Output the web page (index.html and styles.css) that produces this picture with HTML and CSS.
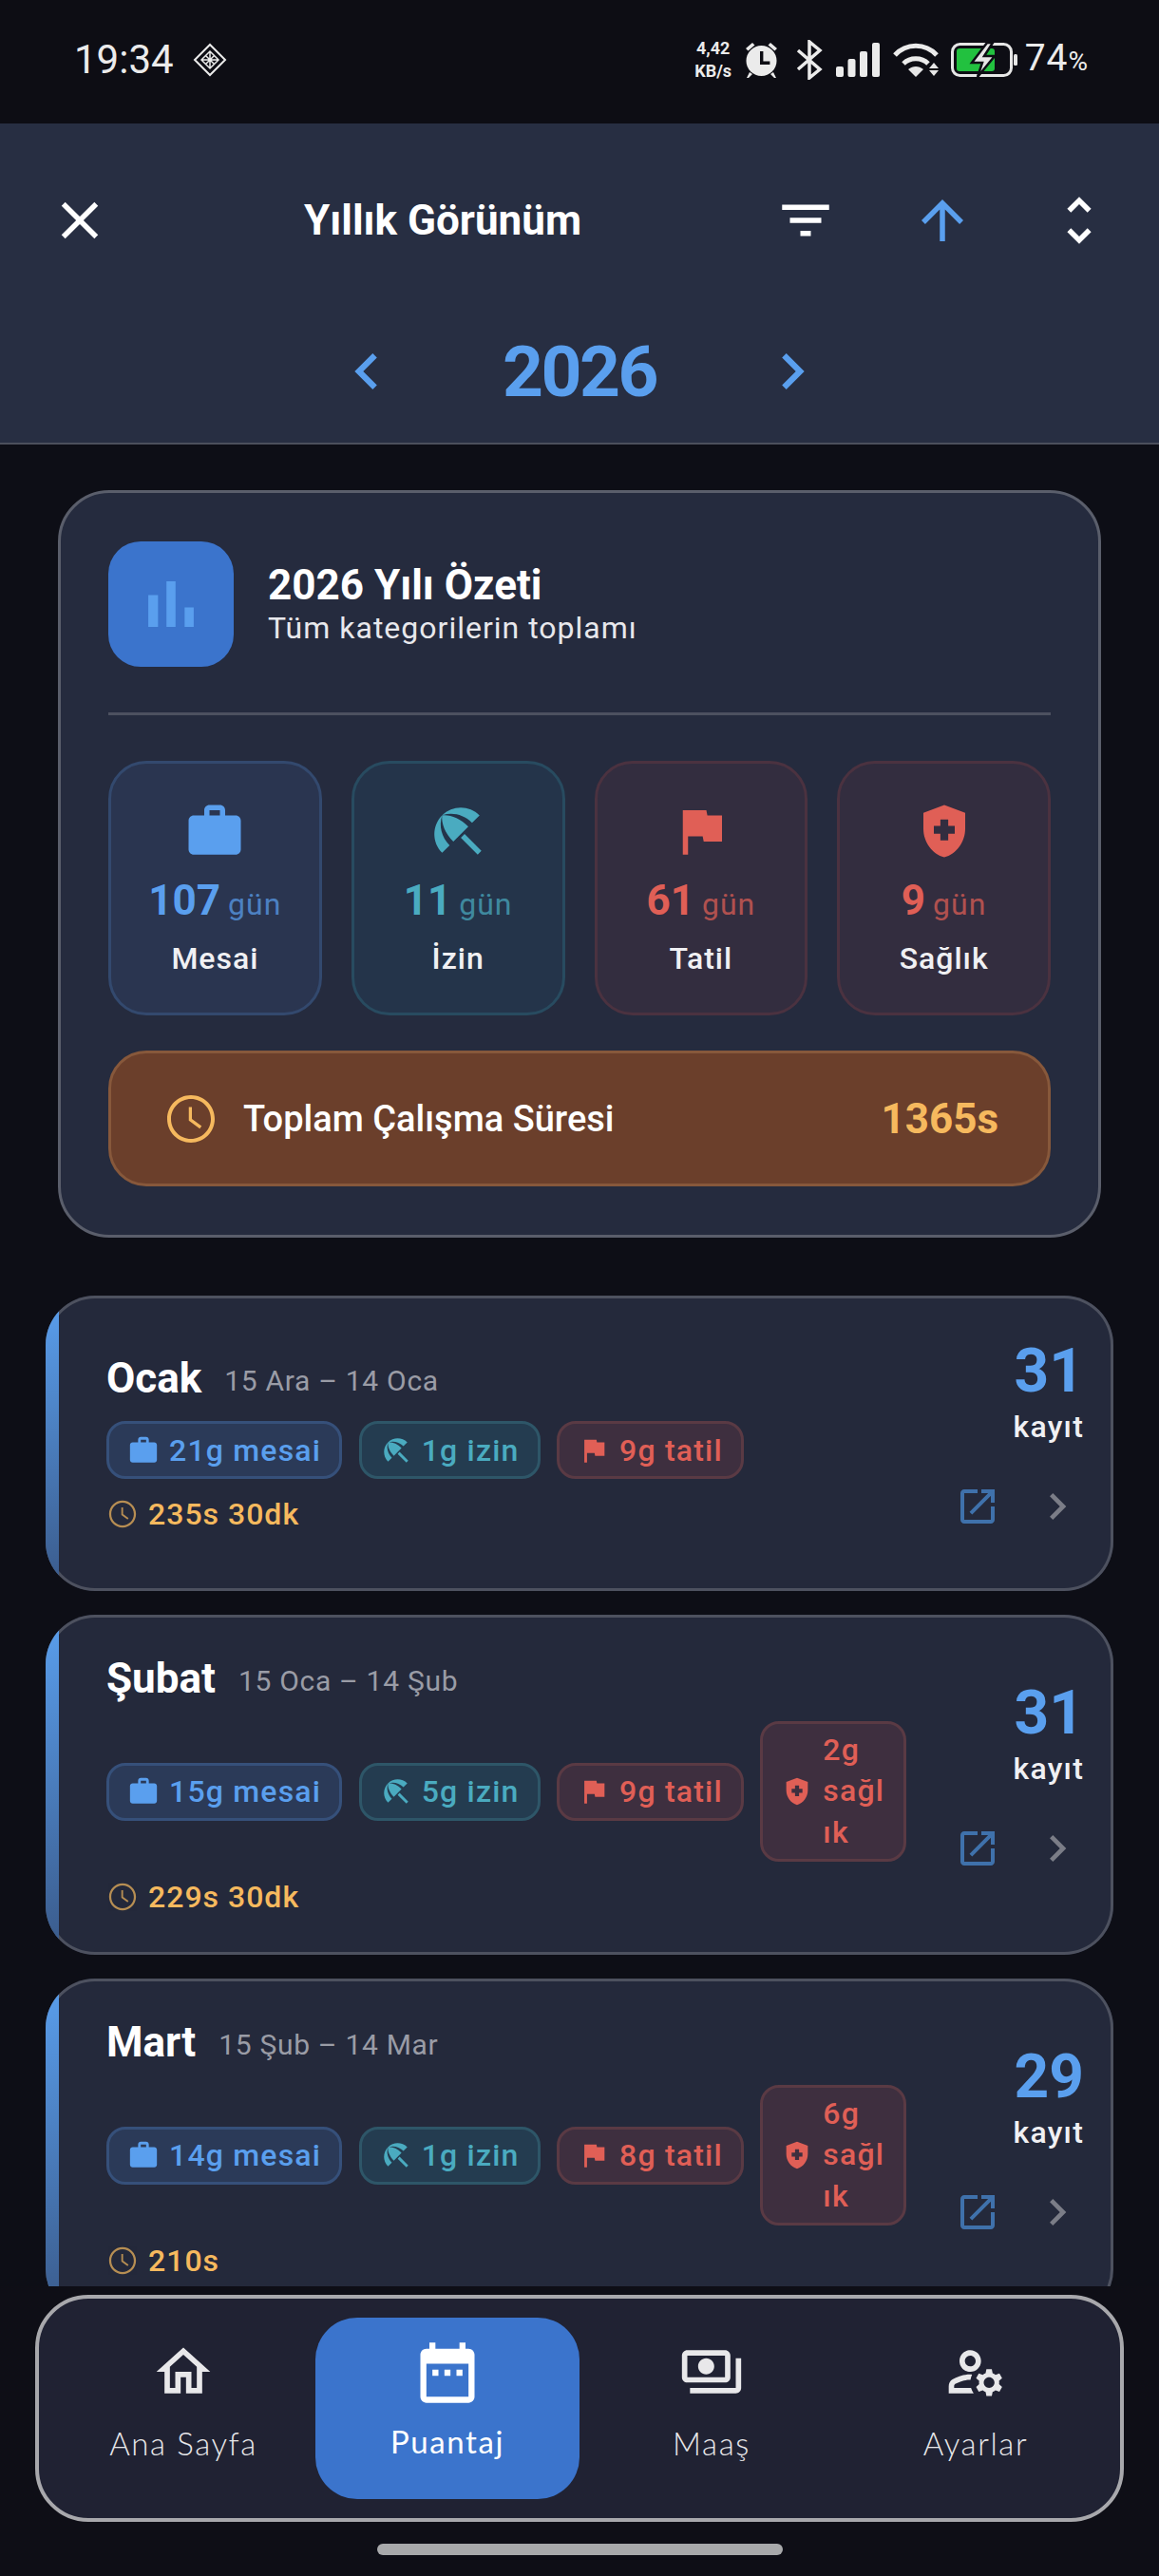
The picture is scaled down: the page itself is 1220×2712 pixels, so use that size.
FILE: index.html
```html
<!DOCTYPE html>
<html lang="tr">
<head>
<meta charset="utf-8">
<title>Yıllık Görünüm</title>
<link rel="stylesheet" href="styles.css">
</head>
<body>
<svg class="sprite" aria-hidden="true">
  <symbol id="i-work" viewBox="0 0 24 24"><path d="M20 6h-4V4c0-1.11-.89-2-2-2h-4c-1.11 0-2 .89-2 2v2H4c-1.11 0-1.99.89-1.99 2L2 19c0 1.11.89 2 2 2h16c1.11 0 2-.89 2-2V8c0-1.11-.89-2-2-2zm-6 0h-4V4h4v2z"/></symbol>
  <symbol id="i-beach" viewBox="0 0 24 24"><path d="M13.127 14.56l1.43-1.43 6.44 6.443L19.57 21zm4.293-5.73l2.86-2.86c-3.95-3.95-10.35-3.96-14.3-.02 3.93-1.3 8.31-.25 11.44 2.88zM5.95 5.98c-3.94 3.95-3.93 10.35.02 14.3l2.86-2.86C5.7 14.29 4.65 9.91 5.95 5.98zm.02-.02l-.01.01c-.38 3.01 1.17 6.88 4.3 10.02l5.73-5.73c-3.13-3.13-7.01-4.68-10.02-4.3z"/></symbol>
  <symbol id="i-flag" viewBox="0 0 24 24"><path d="M14.4 6L14 4H5v17h2v-7h5.6l.4 2h7V6z"/></symbol>
  <symbol id="i-health" viewBox="0 0 24 24"><path d="M10.5 13H8v-3h2.5V7.5h3V10H16v3h-2.5v2.5h-3V13zM12 2L4 5v6.09c0 5.05 3.41 9.76 8 10.91 4.59-1.15 8-5.86 8-10.91V5l-8-3z"/></symbol>
  <symbol id="i-clock" viewBox="0 0 24 24"><path d="M11.99 2C6.47 2 2 6.48 2 12s4.47 10 9.99 10C17.52 22 22 17.52 22 12S17.52 2 11.99 2zM12 20.4c-4.64 0-8.4-3.76-8.4-8.4S7.36 3.6 12 3.6s8.4 3.76 8.4 8.4-3.76 8.4-8.4 8.4zM12.4 7h-1.3v5.7l4.6 3.4.8-1.1-4.1-3z"/></symbol>
  <symbol id="i-open" viewBox="0 0 24 24"><path d="M19 19H5V5h7V3H5c-1.11 0-2 .9-2 2v14c0 1.1.89 2 2 2h14c1.1 0 2-.9 2-2v-7h-2v7zM14 3v2h3.59l-9.83 9.83 1.41 1.41L19 6.41V10h2V3h-7z"/></symbol>
  <symbol id="i-right" viewBox="0 0 24 24"><path d="M10 6L8.59 7.41 13.17 12l-4.58 4.59L10 18l6-6z"/></symbol>
  <symbol id="i-left" viewBox="0 0 24 24"><path d="M15.41 7.41L14 6l-6 6 6 6 1.41-1.41L10.83 12z"/></symbol>
</svg>
<div class="app">
  <header class="status">
    <div class="status-left">
      <span class="clock-text">19:34</span>
      <svg class="diamond line" viewBox="0 0 36 36" stroke="currentColor" stroke-width="2"><path d="M18 2L34 18 18 34 2 18z"/><path stroke-width="1.500" d="M18 9l9 9-9 9-9-9zM13.500 13.500l9 9M22.500 13.500l-9 9M18 9v18M9 18h18"/></svg>
    </div>
    <div class="status-right">
      <div class="speed"><span>4,42</span><span>KB/s</span></div>
      <svg class="st-alarm" viewBox="0 0 35 40"><circle cx="17.5" cy="21" r="16"/><path d="M1 8l7-6 2.500 2.500-7 6zM34 8l-7-6-2.500 2.500 7 6zM5 33l-3 6h2l4-4zM30 33l3 6h-2l-4-4z"/><path d="M16 11h3.400v10.500h7v3.400H16z" fill="#0d0d14"/></svg>
      <svg class="st-bt line" viewBox="0 0 30 42" stroke="currentColor" stroke-width="3.500"><path d="M3 11l23 20-11 9V2l11 9L3 31"/></svg>
      <svg class="st-signal" viewBox="0 0 46 36"><rect x="0" y="25" width="8" height="11" rx="2"/><rect x="12.500" y="17" width="8" height="19" rx="2"/><rect x="25" y="9" width="8" height="27" rx="2"/><rect x="38" y="0" width="8" height="36" rx="2"/></svg>
      <svg class="st-wifi line" viewBox="0 0 50 36" stroke="currentColor" stroke-width="5"><path d="M2 13C14 0 34 0 46 13M11 22c7-7 19-7 26 0"/><path d="M16 28c5-4 11-4 16 0l-8 8z" fill="#e6e6e6" stroke="none"/><path d="M43 21l5 6H38zM38 29h10l-5 6z" fill="#e6e6e6" stroke="none"/></svg>
      <svg class="st-battery" viewBox="0 0 70 36"><rect x="1.500" y="1.500" width="62" height="33" rx="8" fill="none" stroke="#e6e6e6" stroke-width="3"/><rect x="66" y="12" width="4" height="12" rx="1.500" fill="#e6e6e6"/><rect x="6" y="6" width="40" height="24" rx="3" fill="#22c13f"/><path d="M38 0L22 21h11l-5 15 18-22H35l9-14z" fill="#e6e6e6" stroke="#0d0d14" stroke-width="2.500"/></svg>
      <span class="pct">74<small>%</small></span>
    </div>
  </header>

  <section class="toolbar">
    <div class="bar-row">
      <button class="icon-btn" type="button"><svg class="i66 white" viewBox="0 0 24 24"><path d="M19 6.41L17.59 5 12 10.59 6.41 5 5 6.41 10.59 12 5 17.59 6.41 19 12 13.41 17.59 19 19 17.59 13.41 12z"/></svg></button>
      <h1 class="bar-title">Yıllık Görünüm</h1>
      <button class="icon-btn" type="button"><svg class="i66 white" viewBox="0 0 24 24"><path d="M10 18h4v-2h-4v2zM3 6v2h18V6H3zm3 7h12v-2H6v2z"/></svg></button>
      <button class="icon-btn" type="button"><svg class="i66 blue" viewBox="0 0 24 24"><path d="M4 12l1.410 1.410L11 7.830V20h2V7.830l5.580 5.590L20 12l-8-8-8 8z"/></svg></button>
      <button class="icon-btn" type="button"><svg class="i66 white" viewBox="0 0 24 24"><path d="M12 5.830L15.170 9l1.410-1.410L12 3 7.410 7.590 8.830 9 12 5.830zm0 12.340L8.830 15l-1.410 1.410L12 21l4.590-4.590L15.170 15 12 18.170z"/></svg></button>
    </div>
    <div class="year-row">
      <svg class="i76 blue"><use href="#i-left"/></svg>
      <span class="year">2026</span>
      <svg class="i76 blue"><use href="#i-right"/></svg>
    </div>
  </section>

  <main class="main">
    <section class="summary">
      <div class="sum-head">
        <div class="sum-badge"><svg class="i82 blue" viewBox="0 0 24 24"><path d="M5 9.200h3V19H5zM10.600 5h2.800v14h-2.800zm5.600 8H19v6h-2.800z"/></svg></div>
        <div class="sum-text">
          <div class="sum-title">2026 Yılı Özeti</div>
          <div class="sum-sub">Tüm kategorilerin toplamı</div>
        </div>
      </div>
      <div class="divider"></div>
      <div class="tiles">
        <div class="tile tile-blue">
          <svg class="i66"><use href="#i-work"/></svg>
          <div class="tile-num"><b>107</b><span>gün</span></div>
          <div class="tile-label">Mesai</div>
        </div>
        <div class="tile tile-teal">
          <svg class="i66"><use href="#i-beach"/></svg>
          <div class="tile-num"><b>11</b><span>gün</span></div>
          <div class="tile-label">İzin</div>
        </div>
        <div class="tile tile-red">
          <svg class="i66"><use href="#i-flag"/></svg>
          <div class="tile-num"><b>61</b><span>gün</span></div>
          <div class="tile-label">Tatil</div>
        </div>
        <div class="tile tile-red">
          <svg class="i66"><use href="#i-health"/></svg>
          <div class="tile-num"><b>9</b><span>gün</span></div>
          <div class="tile-label">Sağlık</div>
        </div>
      </div>
      <div class="total">
        <svg class="i60"><use href="#i-clock"/></svg>
        <span class="total-label">Toplam Çalışma Süresi</span>
        <span class="total-val">1365s</span>
      </div>
    </section>

    <div class="months">
      <article class="month">
        <div class="month-left">
          <div class="month-head"><span class="month-name">Ocak</span><span class="month-range">15 Ara – 14 Oca</span></div>
          <div class="chips">
            <span class="chip chip-blue"><svg class="i34"><use href="#i-work"/></svg><span>21g mesai</span></span>
            <span class="chip chip-teal"><svg class="i34"><use href="#i-beach"/></svg><span>1g izin</span></span>
            <span class="chip chip-red"><svg class="i34"><use href="#i-flag"/></svg><span>9g tatil</span></span>
          </div>
          <div class="month-time"><svg class="i34"><use href="#i-clock"/></svg><span>235s 30dk</span></div>
        </div>
        <div class="month-right">
          <div class="count">31</div>
          <div class="count-label">kayıt</div>
          <div class="actions"><svg class="i48"><use href="#i-open"/></svg><svg class="i56"><use href="#i-right"/></svg></div>
        </div>
      </article>

      <article class="month">
        <div class="month-left">
          <div class="month-head"><span class="month-name">Şubat</span><span class="month-range">15 Oca – 14 Şub</span></div>
          <div class="chips">
            <span class="chip chip-blue"><svg class="i34"><use href="#i-work"/></svg><span>15g mesai</span></span>
            <span class="chip chip-teal"><svg class="i34"><use href="#i-beach"/></svg><span>5g izin</span></span>
            <span class="chip chip-red"><svg class="i34"><use href="#i-flag"/></svg><span>9g tatil</span></span>
            <span class="chip chip-red chip-narrow"><svg class="i34"><use href="#i-health"/></svg><span class="chip-wrap">2g sağlık</span></span>
          </div>
          <div class="month-time"><svg class="i34"><use href="#i-clock"/></svg><span>229s 30dk</span></div>
        </div>
        <div class="month-right">
          <div class="count">31</div>
          <div class="count-label">kayıt</div>
          <div class="actions"><svg class="i48"><use href="#i-open"/></svg><svg class="i56"><use href="#i-right"/></svg></div>
        </div>
      </article>

      <article class="month">
        <div class="month-left">
          <div class="month-head"><span class="month-name">Mart</span><span class="month-range">15 Şub – 14 Mar</span></div>
          <div class="chips">
            <span class="chip chip-blue"><svg class="i34"><use href="#i-work"/></svg><span>14g mesai</span></span>
            <span class="chip chip-teal"><svg class="i34"><use href="#i-beach"/></svg><span>1g izin</span></span>
            <span class="chip chip-red"><svg class="i34"><use href="#i-flag"/></svg><span>8g tatil</span></span>
            <span class="chip chip-red chip-narrow"><svg class="i34"><use href="#i-health"/></svg><span class="chip-wrap">6g sağlık</span></span>
          </div>
          <div class="month-time"><svg class="i34"><use href="#i-clock"/></svg><span>210s</span></div>
        </div>
        <div class="month-right">
          <div class="count">29</div>
          <div class="count-label">kayıt</div>
          <div class="actions"><svg class="i48"><use href="#i-open"/></svg><svg class="i56"><use href="#i-right"/></svg></div>
        </div>
      </article>
    </div>
  </main>

  <footer class="bottom">
    <nav class="nav">
      <a class="nav-item">
        <svg class="nav-ic" viewBox="0 0 24 24"><path d="M12 5.690l5 4.500V18h-2v-6H9v6H7v-7.810l5-4.500M12 3L2 12h3v8h6v-6h2v6h6v-8h3L12 3z"/></svg>
        <span>Ana Sayfa</span>
      </a>
      <a class="nav-item nav-active">
        <svg class="nav-ic" viewBox="0 0 24 24"><path d="M19 4h-1V2h-2v2H8V2H6v2H5c-1.100 0-2 .900-2 2v14c0 1.100.900 2 2 2h14c1.100 0 2-.900 2-2V6c0-1.100-.900-2-2-2zm0 16H5V9h14v11zM9 13H7v-2h2v2zm4 0h-2v-2h2v2zm4 0h-2v-2h2v2z"/></svg>
        <span>Puantaj</span>
      </a>
      <a class="nav-item">
        <svg class="nav-ic" viewBox="0 0 24 24"><path d="M19 14V6c0-1.100-.900-2-2-2H3c-1.100 0-2 .900-2 2v8c0 1.100.900 2 2 2h14c1.100 0 2-.900 2-2zm-2 0H3V6h14v8zm-7-7c-1.660 0-3 1.340-3 3s1.340 3 3 3 3-1.340 3-3-1.340-3-3-3zm13 0v11c0 1.100-.900 2-2 2H4v-2h17V7h2z"/></svg>
        <span>Maaş</span>
      </a>
      <a class="nav-item">
        <svg class="nav-ic" viewBox="0 0 24 24"><path d="M4 18v-.650c0-.340.160-.660.410-.810C6.100 15.530 8.030 15 10 15c.030 0 .050 0 .080.010.100-.700.300-1.370.590-1.980-.220-.020-.440-.030-.670-.030-2.420 0-4.680.670-6.610 1.820-.880.520-1.390 1.500-1.390 2.530V20h9.260c-.420-.600-.750-1.280-.970-2H4zM10 12c2.210 0 4-1.790 4-4s-1.790-4-4-4-4 1.790-4 4 1.790 4 4 4zm0-6c1.100 0 2 .900 2 2s-.900 2-2 2-2-.900-2-2 .900-2 2-2zM20.750 16c0-.220-.030-.420-.060-.630l1.140-1.010-1-1.730-1.450.490c-.320-.270-.680-.480-1.080-.630L18 11h-2l-.300 1.490c-.400.150-.760.360-1.080.630l-1.450-.490-1 1.730 1.140 1.010c-.030.210-.060.410-.060.630s.030.420.060.630l-1.140 1.010 1 1.730 1.450-.490c.320.270.680.480 1.080.63L16 21h2l.300-1.490c.400-.150.760-.360 1.080-.630l1.450.490 1-1.730-1.140-1.010c.030-.210.060-.410.060-.630zM17 18c-1.100 0-2-.900-2-2s.900-2 2-2 2 .900 2 2-.900 2-2 2z"/></svg>
        <span>Ayarlar</span>
      </a>
    </nav>
    <div class="home-bar"></div>
  </footer>
</div>
</body>
</html>
```

FILE: styles.css
```css
* { box-sizing: border-box; }
html, body { margin: 0; padding: 0; background: #0d0e16; }
body { font-family: Roboto, "Liberation Sans", sans-serif; color: #fff; }
svg { fill: currentColor; flex: none; display: block; }
svg.line { fill: none; }
.sprite { width: 0; height: 0; position: absolute; }

.i34 { width: 34px; height: 34px; }
.i48 { width: 48px; height: 48px; color: #3f71ab; }
.i56 { width: 56px; height: 56px; color: #7b7d87; }
.i60 { width: 60px; height: 60px; color: #f6b95e; }
.i66 { width: 66px; height: 66px; }
.i76 { width: 76px; height: 76px; }
.i82 { width: 82px; height: 82px; }
.white { color: #fff; }
.blue { color: #5a9fee; }

.app { width: 1220px; height: 2712px; display: flex; flex-direction: column; overflow: hidden; background: #0d0e16; }

/* status bar */
.status { height: 130px; flex: none; background: #0d0d14; color: #ebebeb; display: flex; justify-content: space-between; align-items: flex-start; padding: 0 75px 0 78px; }
.status-left { display: flex; align-items: center; gap: 20px; height: 126px; }
.clock-text { font-size: 42px; line-height: 50px; }
.diamond { width: 36px; height: 36px; }
.status-right { display: flex; align-items: center; height: 126px; }
.speed { display: flex; flex-direction: column; align-items: center; width: 44px; margin-right: 11px; font-size: 18px; line-height: 24px; font-weight: 700; }
.st-alarm { width: 35px; height: 40px; margin-right: 18px; }
.st-bt { width: 30px; height: 42px; margin-right: 13px; }
.st-signal { width: 46px; height: 36px; margin-right: 14px; }
.st-wifi { width: 50px; height: 36px; margin-right: 11px; }
.st-battery { width: 70px; height: 36px; margin-right: 8px; }
.pct { font-size: 39px; line-height: 50px; letter-spacing: 1px; }
.pct small { font-size: 28px; letter-spacing: 0; }

/* toolbar */
.toolbar { flex: none; height: 338px; background: #272e42; border-bottom: 2px solid #4b4f5c; padding: 30px 12px 0; }
.bar-row { height: 144px; display: flex; align-items: center; }
.icon-btn { width: 144px; height: 144px; flex: none; padding: 0; border: 0; background: none; color: inherit; display: flex; align-items: center; justify-content: center; }
.bar-title { flex: 1; margin: 0; text-align: center; font-size: 44px; line-height: 50px; font-weight: 700; color: #fff; }
.year-row { margin-top: 25px; height: 124px; display: flex; align-items: center; justify-content: center; gap: 91px; }
.year { width: 190px; text-align: center; font-size: 75px; line-height: 88px; font-weight: 700; color: #5a9fee; letter-spacing: -2.5px; }

/* scroll area */
.main { flex: 1; min-height: 0; overflow: hidden; padding-top: 48px; }

.summary { margin: 0 61px; height: 787px; background: #252b3e; border: 3px solid #5a5e6b; border-radius: 54px; padding: 51px 50px; }
.sum-head { display: flex; align-items: center; gap: 36px; height: 132px; }
.sum-badge { width: 132px; height: 132px; border-radius: 34px; background: #3b74cc; display: flex; align-items: center; justify-content: center; }
.sum-title { font-size: 44px; line-height: 50px; font-weight: 700; color: #fff; }
.sum-sub { font-size: 32px; line-height: 40px; color: #e8e8ec; letter-spacing: 1px; }
.divider { height: 3px; margin: 48px 0; background: #4d5160; }
.tiles { display: grid; grid-template-columns: repeat(4, 1fr); gap: 31px; }
.tile { height: 268px; border: 3px solid; border-radius: 40px; display: flex; flex-direction: column; align-items: center; padding-top: 38px; }
.tile-blue { background: #2a3550; border-color: #33496e; color: #5a9fee; }
.tile-teal { background: #24344a; border-color: #284b60; color: #4aabc0; }
.tile-red { background: #332d3f; border-color: #4b3240; color: #e05f56; }
.tile-num { display: flex; align-items: baseline; gap: 8px; margin-top: 15px; line-height: 50px; }
.tile-num b { font-size: 44px; font-weight: 700; }
.tile-num span { font-size: 32px; letter-spacing: 1px; opacity: .72; }
.tile-label { margin-top: 12px; font-size: 32px; line-height: 40px; font-weight: 500; color: #f0f0f3; letter-spacing: 1px; }
.total { height: 143px; margin-top: 37px; display: flex; align-items: center; gap: 25px; padding: 0 52px 0 54px; background: #6b3f2b; border: 3px solid #87583b; border-radius: 40px; }
.total-label { flex: 1; font-size: 38px; line-height: 44px; font-weight: 500; color: #fff; }
.total-val { font-size: 44px; line-height: 50px; font-weight: 700; color: #f6b95e; }

/* months */
.months { margin: 61px 48px 0; display: flex; flex-direction: column; gap: 25px; }
.month { position: relative; overflow: hidden; display: flex; align-items: center; padding: 42px 31px 42px 64px; background: #24293b; border-radius: 52px; box-shadow: inset 0 0 0 3px #4d515f; }
.month::before { content: ""; position: absolute; left: 0; top: 0; bottom: 0; width: 14px; background: linear-gradient(#5a9fee, #3a5a8a); }
.month-left { flex: 1; min-width: 0; }
.month-head { display: flex; align-items: center; gap: 24px; }
.month-name { font-size: 44px; line-height: 50px; font-weight: 700; color: #fff; }
.month-range { padding-top: 4px; font-size: 30px; font-weight: 400; color: #9a9ca6; letter-spacing: .7px; }
.chips { display: flex; align-items: center; gap: 17.5px; margin-top: 20px; }
.chip { flex: none; display: flex; align-items: center; gap: 10px; padding: 5.5px 19px; border: 3px solid; border-radius: 20px; font-size: 32px; line-height: 44px; font-weight: 500; letter-spacing: 1.2px; }
.chip-blue { background: #2b3a58; border-color: #36507a; color: #5a9fee; }
.chip-teal { background: #243c50; border-color: #2e5668; color: #4aabc0; }
.chip-red { background: #3e2f3f; border-color: #5a3a44; color: #e05f56; }
.chip-narrow { width: 154px; padding-right: 14px; line-height: 43.7px; }
.chip-wrap { flex: 1; min-width: 0; overflow-wrap: anywhere; }
.month-time { display: flex; align-items: center; gap: 10px; margin-top: 18px; color: #f6b95e; font-size: 32px; line-height: 38px; font-weight: 500; letter-spacing: 1px; }
.month-time svg { opacity: .7; }
.month-right { flex: none; display: flex; flex-direction: column; align-items: flex-end; margin-left: 50px; }
.count { font-size: 64px; line-height: 76px; font-weight: 700; color: #5a9fee; }
.count-label { font-size: 32px; line-height: 40px; font-weight: 500; color: #f0f0f3; letter-spacing: 1.2px; }
.actions { display: flex; align-items: center; gap: 32px; margin-top: 36px; margin-bottom: 19px; }

/* bottom nav */
.bottom { flex: none; height: 305px; background: #0e0e16; padding: 9px 37px 0; }
.nav { height: 239px; display: flex; align-items: center; padding: 0 13px; background: #202233; border: 4px solid #a8a8ac; border-radius: 56px; }
.nav-item { flex: 1; height: 191px; display: flex; flex-direction: column; align-items: center; color: #e8e8ea; border-radius: 44px; font-family: Lato, Roboto, sans-serif; font-size: 33px; line-height: 40px; font-weight: 300; letter-spacing: 1.6px; padding-top: 23px; }
.nav-ic { width: 68px; height: 68px; margin-bottom: 21px; }
.nav-active { background: #3b74cc; color: #fff; font-weight: 400; padding-top: 20px; }
.nav-active .nav-ic { width: 76px; height: 76px; margin-bottom: 14px; }
.home-bar { width: 427px; height: 12px; margin: 23px auto 0; border-radius: 6px; background: #a8a9ab; }
```
